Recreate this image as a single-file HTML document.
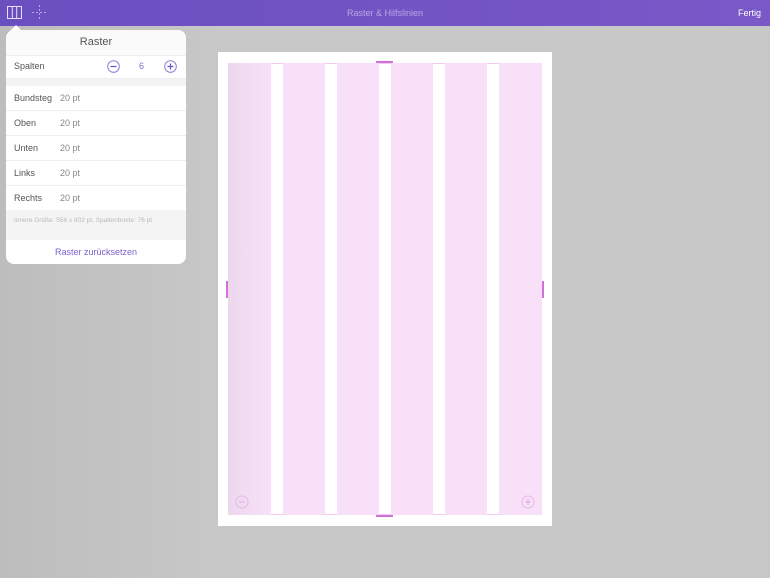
<!DOCTYPE html><html><head><style>
body{margin:0;width:770px;height:578px;overflow:hidden;background:#c8c8c8;font-family:"Liberation Sans",sans-serif;position:relative}
.bar{position:absolute;left:0;top:0;width:770px;height:26px;background:linear-gradient(90deg,#6a4fc0,#7a58c8)}
.abs{position:absolute}
.panel{position:absolute;left:6px;top:30px;width:180px;height:234px;background:#fff;border-radius:8px;overflow:hidden;font-size:9px;color:#555}
.row{position:absolute;left:0;width:180px;border-bottom:1px solid #eee;height:24px;line-height:24px}
.row span{position:absolute;left:8px}.row b{font-weight:normal;position:absolute;left:54px;color:#888}
.col{position:absolute;top:63px;height:452px;background:#f8e1f8}
</style></head><body>
<div class="abs" style="left:0;top:26px;width:230px;height:552px;background:linear-gradient(90deg,#bdbdbd,#c8c8c8)"></div>
<div class="bar"></div>
<svg class="abs" style="left:7px;top:6px" width="15" height="13"><rect x="0.5" y="0.5" width="14" height="12" fill="none" stroke="#e8e0ff"/><line x1="5.3" y1="0" x2="5.3" y2="13" stroke="#e8e0ff"/><line x1="9.7" y1="0" x2="9.7" y2="13" stroke="#e8e0ff"/></svg>
<svg class="abs" style="left:32px;top:5px" width="15" height="15"><line x1="7.5" y1="0" x2="7.5" y2="15" stroke="#b9a8e8" stroke-dasharray="2,2"/><line x1="0" y1="7.5" x2="15" y2="7.5" stroke="#b9a8e8" stroke-dasharray="2,2"/></svg>
<div class="abs" style="left:0;width:770px;top:8px;text-align:center;font-size:9px;color:#b8a8e4">Raster &amp; Hilfslinien</div>
<div class="abs" style="right:9px;top:8px;font-size:9px;color:#fff">Fertig</div>
<div class="abs" style="left:10px;top:25px;width:0;height:0;border-left:6px solid transparent;border-right:6px solid transparent;border-bottom:6px solid #fff"></div>
<div class="panel">
<div class="abs" style="top:0;left:0;width:180px;height:25px;line-height:25px;text-align:center;font-size:11px;color:#555;background:#fafafa;border-bottom:1px solid #eee">Raster</div>
<div class="row" style="top:25px;height:23px;line-height:23px"><span>Spalten</span>
<svg class="abs" style="left:101px;top:5px" width="13" height="13"><circle cx="6.5" cy="6.5" r="5.8" fill="none" stroke="#8e7ad4"/><line x1="3.5" y1="6.5" x2="9.5" y2="6.5" stroke="#6a55c0" stroke-width="1.2"/></svg>
<b style="left:133px;color:#7a6ac8">6</b>
<svg class="abs" style="left:158px;top:5px" width="13" height="13"><circle cx="6.5" cy="6.5" r="5.8" fill="none" stroke="#8e7ad4"/><line x1="3.5" y1="6.5" x2="9.5" y2="6.5" stroke="#6a55c0" stroke-width="1.2"/><line x1="6.5" y1="3.5" x2="6.5" y2="9.5" stroke="#6a55c0" stroke-width="1.2"/></svg></div>
<div class="abs" style="top:49px;left:0;width:180px;height:7px;background:#f3f3f3"></div>
<div class="row" style="top:56px"><span>Bundsteg</span><b>20 pt</b></div>
<div class="row" style="top:81px"><span>Oben</span><b>20 pt</b></div>
<div class="row" style="top:106px"><span>Unten</span><b>20 pt</b></div>
<div class="row" style="top:131px"><span>Links</span><b>20 pt</b></div>
<div class="row" style="top:156px"><span>Rechts</span><b>20 pt</b></div>
<div class="abs" style="top:180px;left:0;width:180px;height:30px;background:#f4f4f4;font-size:6.5px;color:#bbb"><div style="padding:7px 0 0 8px">Innere Größe: 556 x 802 pt, Spaltenbreite: 76 pt</div></div>
<div class="abs" style="top:210px;left:0;width:180px;height:24px;line-height:24px;text-align:center;color:#7a62cc">Raster zurücksetzen</div>
</div>
<div class="abs" style="left:218px;top:52px;width:334px;height:474px;background:#fff"></div>
<div class="abs" style="left:228px;top:63px;width:314px;height:452px;border:1px solid #f2c8f2;box-sizing:border-box"></div>
<div class="col" style="left:228px;width:43px;background:linear-gradient(90deg,#ecd8ec,#f8e1f8)"></div>
<div class="col" style="left:283px;width:42px"></div>
<div class="col" style="left:337px;width:42px"></div>
<div class="col" style="left:391px;width:42px"></div>
<div class="col" style="left:445px;width:42px"></div>
<div class="col" style="left:499px;width:43px"></div>
<div class="abs" style="left:376px;top:61px;width:17px;height:2px;background:#d070d8"></div>
<div class="abs" style="left:376px;top:515px;width:17px;height:2px;background:#d070d8"></div>
<div class="abs" style="left:226px;top:281px;width:2px;height:17px;background:#d070d8"></div>
<div class="abs" style="left:542px;top:281px;width:2px;height:17px;background:#d070d8"></div>
<svg class="abs" style="left:235px;top:495px" width="14" height="14"><circle cx="7" cy="7" r="6" fill="none" stroke="#e8b8e8"/><line x1="4" y1="7" x2="10" y2="7" stroke="#e0a8e0"/></svg>
<svg class="abs" style="left:521px;top:495px" width="14" height="14"><circle cx="7" cy="7" r="6" fill="none" stroke="#e8b8e8"/><line x1="4" y1="7" x2="10" y2="7" stroke="#e0a8e0"/><line x1="7" y1="4" x2="7" y2="10" stroke="#e0a8e0"/></svg>
</body></html>
